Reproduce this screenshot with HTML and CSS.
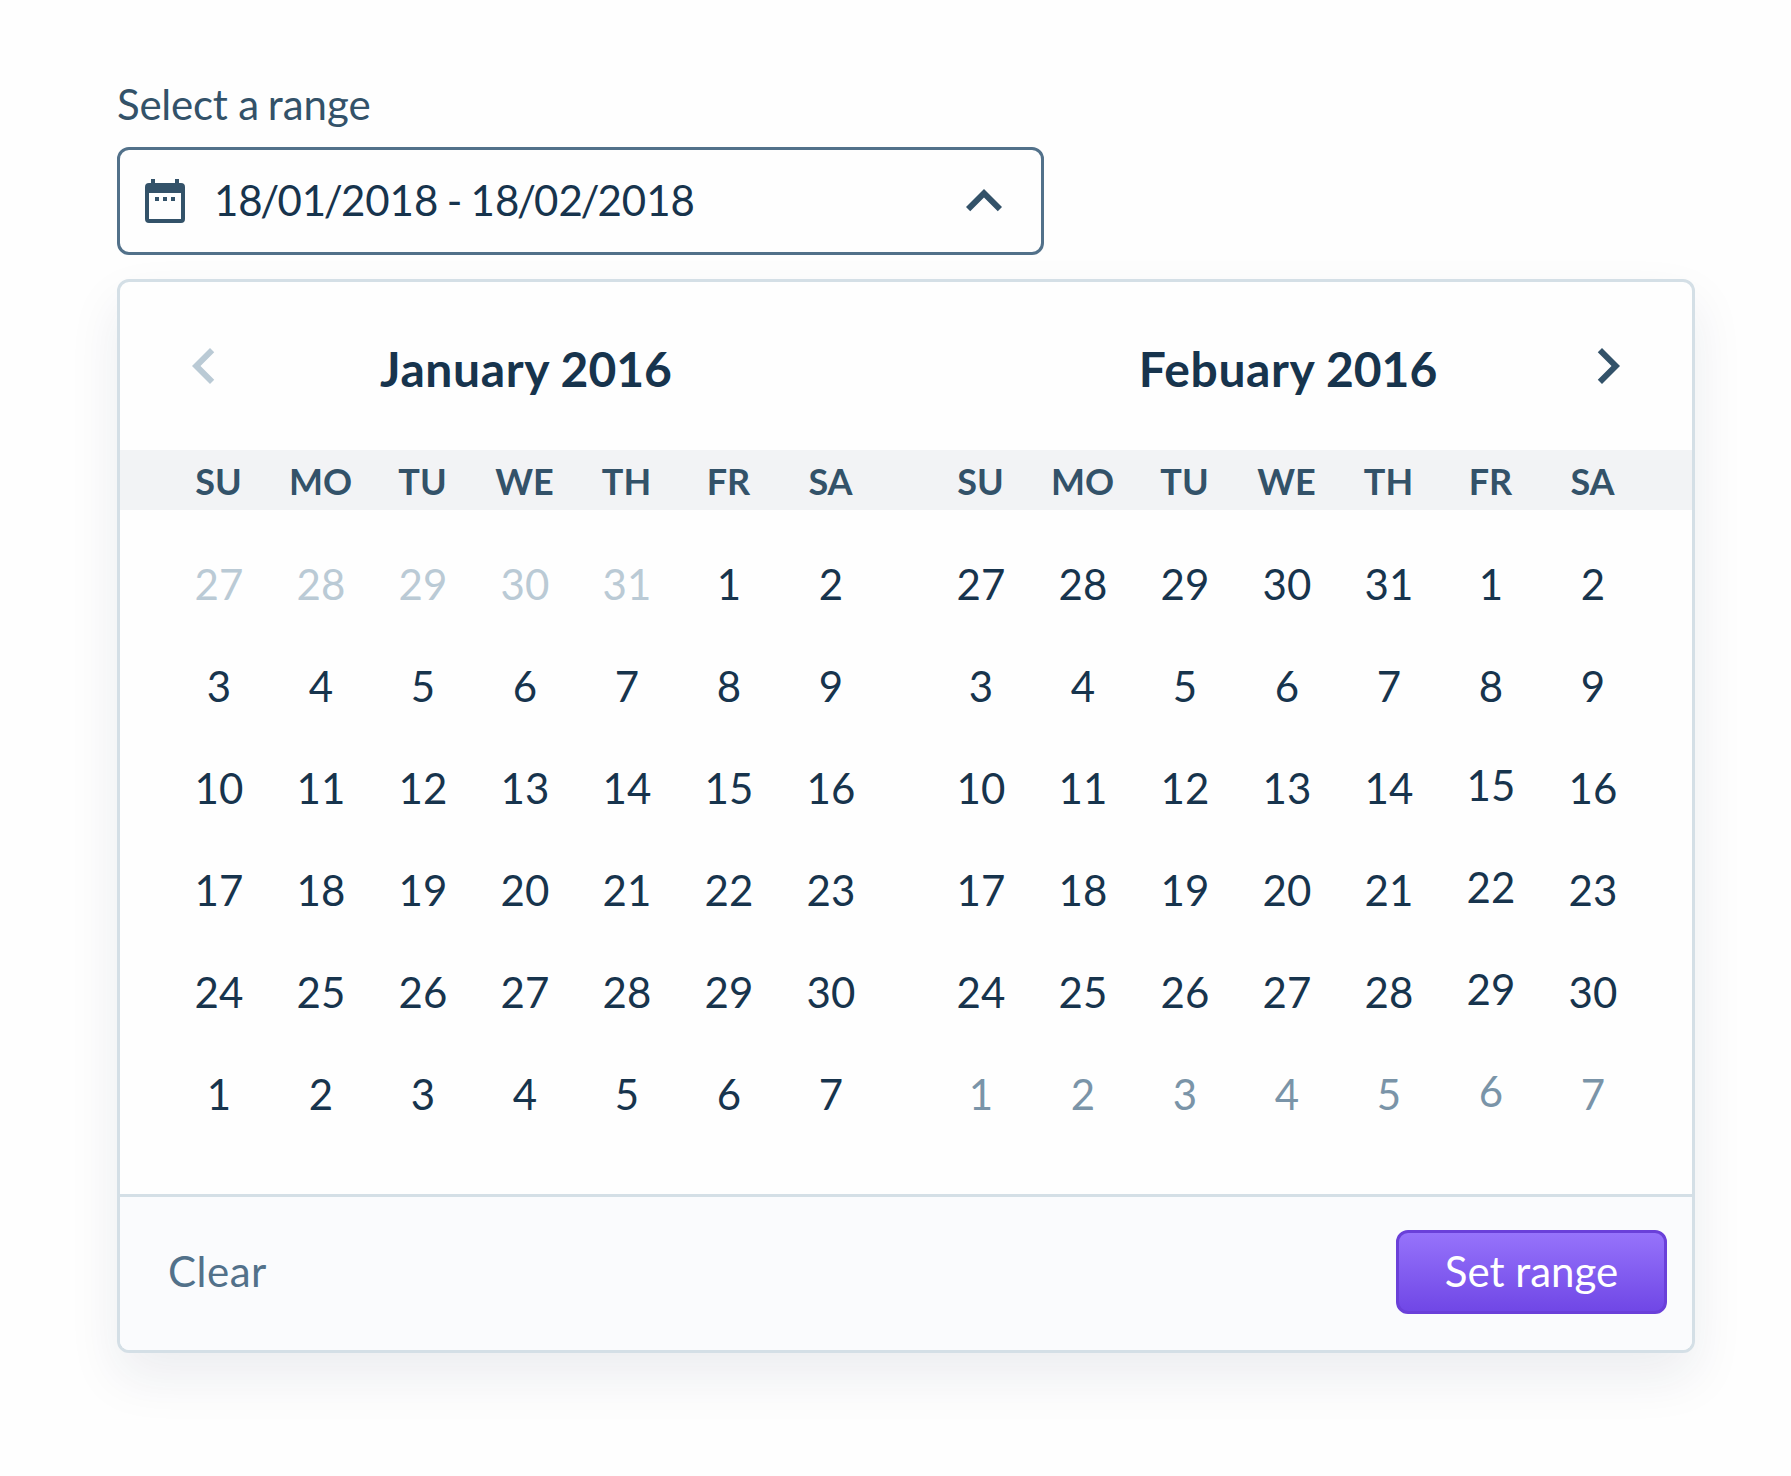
FILE: index.html
```html
<!DOCTYPE html>
<html lang="en">
<head>
<meta charset="utf-8">
<title>Date range picker</title>
<link rel="stylesheet" href="styles.css">
</head>
<body>
<main class="picker">
  <label class="label"><span class="tight">Select</span> a<span class="thin-space"> </span>range</label>
  <div class="field">
    <svg class="field-icon" viewBox="0 0 40 44" width="40" height="44"><path fill="currentColor" fill-rule="evenodd" d="M6 0h4v4h20V0h4v4h2a4 4 0 0 1 4 4v32a4 4 0 0 1-4 4H4a4 4 0 0 1-4-4V8a4 4 0 0 1 4-4h2zM4 14v26h32V14zM10 18h4v4h-4zM18 18h4v4h-4zM26 18h4v4h-4z"/></svg>
    <span class="field-value">18<i class="slash">/</i>01<i class="slash">/</i>2018 - 18<i class="slash">/</i>02<i class="slash">/</i>2018</span>
    <svg class="chevron" viewBox="0 0 24 24"><path fill="currentColor" d="M12 8l-6 6 1.41 1.41L12 10.83l4.59 4.58L18 14z"/></svg>
  </div>

  <section class="panel">
    <header class="months">
      <div class="month month-prev">
        <svg class="chevron muted" viewBox="0 0 24 24"><path fill="currentColor" d="M15.41 7.41L14 6l-6 6 6 6 1.41-1.41L10.83 12z"/></svg>
        <h2 class="title"><span class="month-name">January</span> 2016</h2>
      </div>
      <div class="month month-next">
        <h2 class="title"><span class="month-name">Febuary</span> 2016</h2>
        <svg class="chevron" viewBox="0 0 24 24"><path fill="currentColor" d="M10 6L8.59 7.41 13.17 12l-4.58 4.59L10 18l6-6z"/></svg>
      </div>
    </header>

    <div class="weekdays">
      <div class="week"><span>SU</span><span>MO</span><span>TU</span><span>WE</span><span>TH</span><span>FR</span><span>SA</span></div>
      <div class="week"><span>SU</span><span>MO</span><span>TU</span><span>WE</span><span>TH</span><span>FR</span><span>SA</span></div>
    </div>

    <div class="days">
      <div class="grid">
        <span class="past">27</span><span class="past">28</span><span class="past">29</span><span class="past">30</span><span class="past">31</span><span>1</span><span>2</span>
        <span>3</span><span>4</span><span>5</span><span>6</span><span>7</span><span>8</span><span>9</span>
        <span>10</span><span>11</span><span>12</span><span>13</span><span>14</span><span>15</span><span>16</span>
        <span>17</span><span>18</span><span>19</span><span>20</span><span>21</span><span>22</span><span>23</span>
        <span>24</span><span>25</span><span>26</span><span>27</span><span>28</span><span>29</span><span>30</span>
        <span>1</span><span>2</span><span>3</span><span>4</span><span>5</span><span>6</span><span>7</span>
      </div>
      <div class="grid">
        <span>27</span><span>28</span><span>29</span><span>30</span><span>31</span><span>1</span><span>2</span>
        <span>3</span><span>4</span><span>5</span><span>6</span><span>7</span><span>8</span><span>9</span>
        <span>10</span><span>11</span><span>12</span><span>13</span><span>14</span><span class="raised">15</span><span>16</span>
        <span>17</span><span>18</span><span>19</span><span>20</span><span>21</span><span class="raised">22</span><span>23</span>
        <span>24</span><span>25</span><span>26</span><span>27</span><span>28</span><span class="raised">29</span><span>30</span>
        <span class="next">1</span><span class="next">2</span><span class="next">3</span><span class="next">4</span><span class="next">5</span><span class="next raised">6</span><span class="next">7</span>
      </div>
    </div>

    <footer class="actions">
      <button class="clear" type="button">Clear</button>
      <button class="submit" type="button">Set range</button>
    </footer>
  </section>
</main>
</body>
</html>
```
FILE: styles.css
```css
* {
  box-sizing: border-box;
}

html {
  background: #fefefe;
}

body {
  min-height: 100vh;
  margin: 0;
  padding: 80px 96px 0 117px;
  color: #17344d;
  font: 400 42px/48px Lato, "Liberation Sans", sans-serif;
}

.picker {
  width: 1578px;
}

.label {
  display: block;
  margin-bottom: 19px;
  color: #335269;
}

.tight {
  letter-spacing: -0.25px;
}

.thin-space {
  letter-spacing: -2.2px;
}

.field {
  display: flex;
  align-items: center;
  width: 927px;
  height: 108px;
  padding: 0 21px 0 25px;
  border: 3px solid #52718a;
  border-radius: 12px;
  background: #fefefe;
}

.field-icon {
  color: #335269;
}

.field-value {
  flex: 1;
  margin-left: 29px;
  padding-bottom: 2px;
  word-spacing: -2.4px;
}

.slash {
  margin: 0 -1.9px 0 -2.4px;
  font-style: normal;
}

.chevron {
  flex: none;
  width: 72px;
  height: 72px;
  color: #335269;
}

.muted {
  color: #bacad5;
}

.panel {
  margin-top: 24px;
  border: 3px solid #d4dfe6;
  border-radius: 12px;
  background: #fefefe;
  box-shadow: 0 24px 52px rgba(25, 42, 72, 0.08);
  overflow: hidden;
}

.months,
.weekdays,
.days {
  display: grid;
  grid-template-columns: 714px 714px;
  gap: 48px;
}

.months {
  height: 168px;
  padding: 0 48px;
}

.month {
  display: flex;
  align-items: center;
}

.month-prev {
  padding-right: 72px;
}

.month-next {
  padding-left: 72px;
}

.title {
  flex: 1;
  margin: 0;
  padding: 5px 0 0 2px;
  font-size: 48px;
  font-weight: 700;
  line-height: 58px;
  text-align: center;
  word-spacing: -1.2px;
}

.month-name {
  letter-spacing: 0.6px;
}

.weekdays {
  height: 60px;
  padding: 0 48.5px 0 47.5px;
  background: #f2f3f5;
  color: #335269;
  font-size: 36px;
  font-weight: 700;
  line-height: 62px;
}

.week,
.grid {
  display: grid;
  grid-template-columns: repeat(7, 102px);
  text-align: center;
}

.days {
  padding: 23px 48px 49px;
}

.grid {
  grid-auto-rows: 102px;
  line-height: 102px;
  letter-spacing: 0.2px;
}

.past {
  color: #bacad5;
}

.next {
  color: #7a94a8;
}

.raised {
  line-height: 96px;
}

.actions {
  display: flex;
  align-items: center;
  justify-content: space-between;
  height: 156px;
  padding: 0 25px 3px 48px;
  border-top: 3px solid #d4dfe6;
  background: #fafbfd;
}

.clear,
.submit {
  margin: 0;
  padding: 0 0 2px;
  border: 0;
  background: none;
  color: #52718a;
  font: inherit;
}

.clear {
  letter-spacing: 0.5px;
}

.submit {
  width: 271px;
  height: 84px;
  border: 3px solid #6a40d9;
  border-radius: 12px;
  background: linear-gradient(#9673fb, #7047e6);
  color: #fff;
}
```
